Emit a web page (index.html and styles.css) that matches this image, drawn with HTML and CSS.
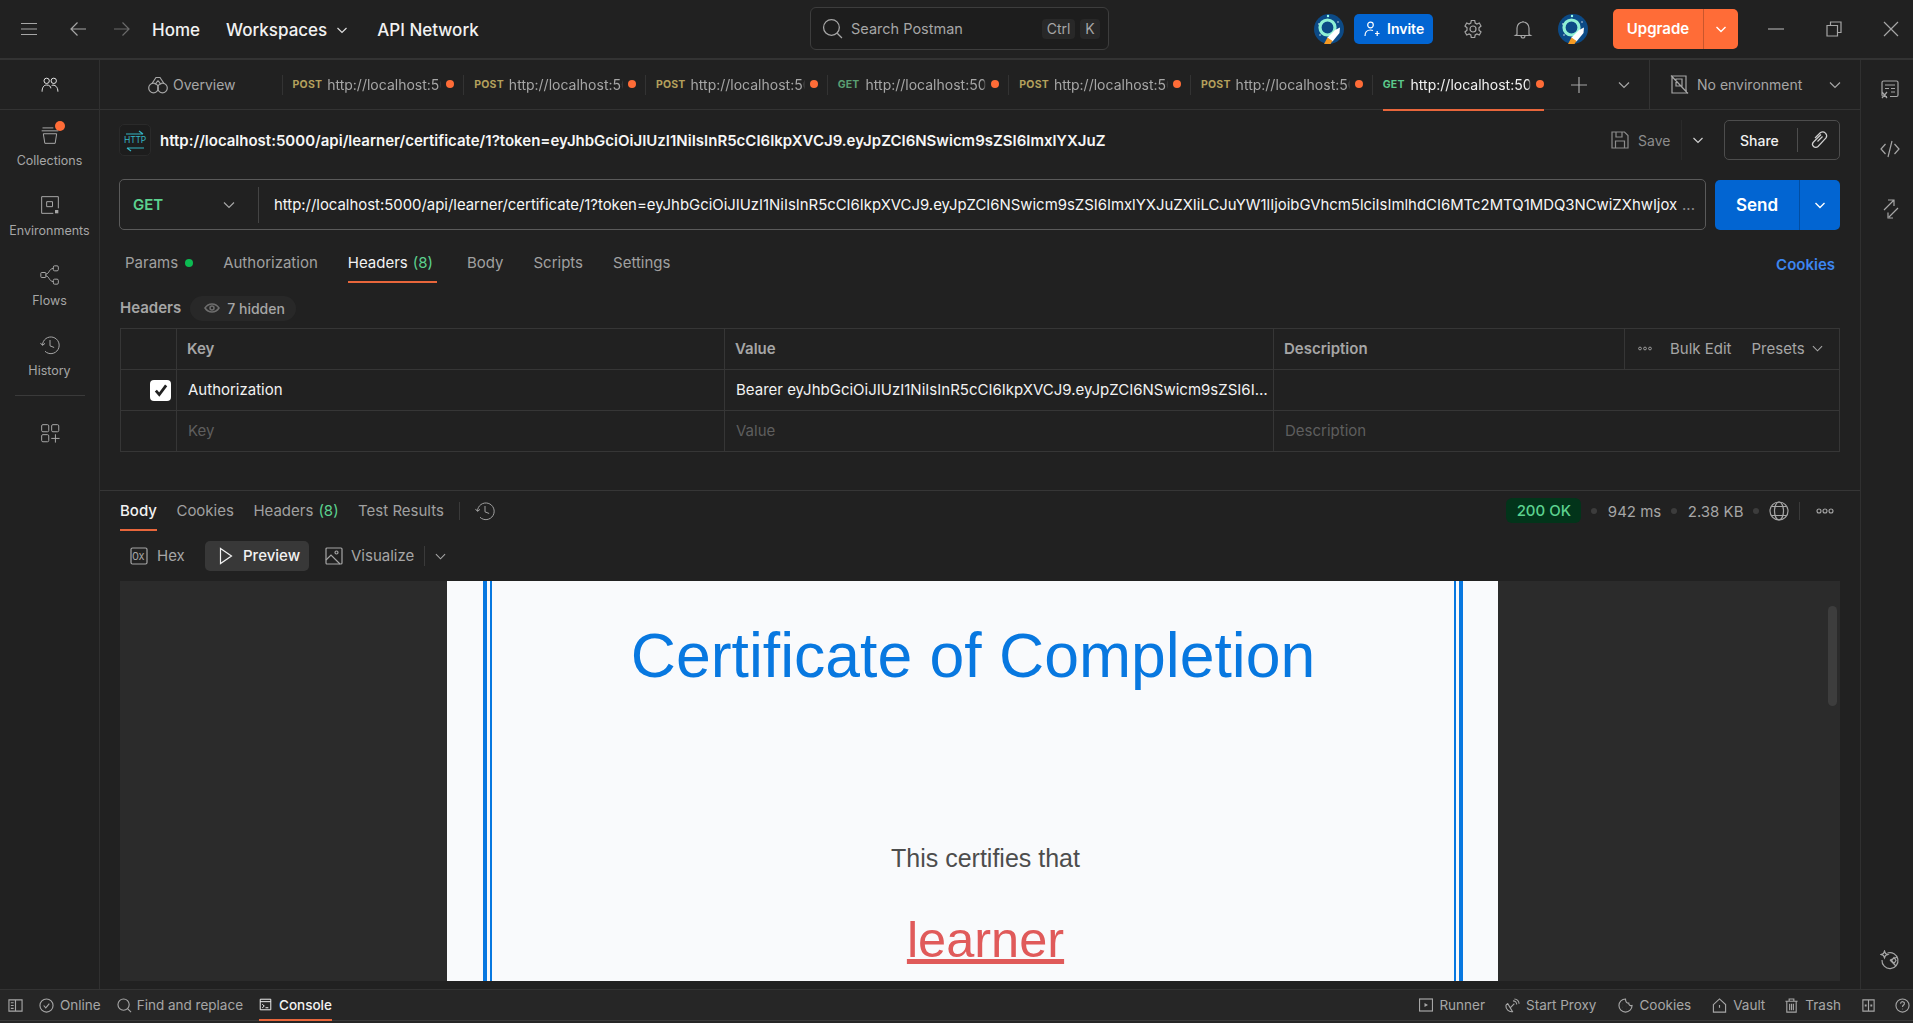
FILE: index.html
```html
<!DOCTYPE html>
<html lang="en">
<head>
<meta charset="utf-8">
<title>Postman</title>
<link rel="stylesheet" href="styles.css">
</head>
<body>
<header class="topbar">
  <div class="top-left">
    <svg class="ic hamb" viewBox="0 0 20 20"><path d="M2 4.500h16M2 10h16M2 15.500h16"/></svg>
    <svg class="ic back" viewBox="0 0 20 20"><path d="M18 10H3M9.500 3.500 3 10l6.500 6.500"/></svg>
    <svg class="ic fwd" viewBox="0 0 20 20"><path d="M2 10h15M10.500 3.500 17 10l-6.500 6.500"/></svg>
    <span class="nav home">Home</span>
    <span class="nav work">Workspaces</span>
    <svg class="ic chev-nav" viewBox="0 0 12 12"><path d="M1.500 4 6 8.500 10.500 4"/></svg>
    <span class="nav api">API Network</span>
  </div>
  <div class="search">
    <svg class="ic search-ic" viewBox="0 0 20 20"><circle cx="9" cy="9" r="7.500"/><path d="m14.500 14.500 4.500 4.500"/></svg>
    <span class="search-text">Search Postman</span>
    <span class="key key-ctrl">Ctrl</span>
    <span class="key key-k">K</span>
  </div>
  <div class="top-right">
    <svg class="avatar av1" viewBox="0 0 30 30"><circle cx="15" cy="15" r="15" fill="#0c4a86"/><circle cx="5" cy="10" r=".8" fill="#fff"/><circle cx="14" cy="2" r="1.200" fill="#9fe"/><circle cx="6" cy="21" r=".7" fill="#fff"/><circle cx="24" cy="8" r=".7" fill="#fff"/><circle cx="13.500" cy="13.500" r="7.500" fill="none" stroke="#8ff0d4" stroke-width="3.200"/><path d="M13 24l8-8 5-2.500-.5 5.500-7 8.500z" fill="#fff"/><path d="M10 30l3.500-6.500 5 3.500-2 3z" fill="#f59a23"/></svg>
    <button class="invite">
      <svg class="ic invite-ic" viewBox="0 0 16 16"><circle cx="6.500" cy="4" r="2.800"/><path d="M1 15c0-4 2-6 5.500-6 1 0 1.800.2 2.500.5M11 12.500h4.500M13.200 10v5"/></svg>
      <span>Invite</span>
    </button>
    <svg class="ic gear" viewBox="0 0 20 20"><path d="M8.300 1.500h3.400l.5 2.600 1.700.9 2.400-1 1.700 3-2 1.700v2.600l2 1.700-1.700 3-2.400-1-1.700.9-.5 2.600H8.300l-.5-2.600-1.700-.9-2.400 1-1.700-3 2-1.700V8.700l-2-1.700 1.700-3 2.400 1 1.700-.9z"/><circle cx="10" cy="10" r="3"/></svg>
    <svg class="ic bell" viewBox="0 0 20 20"><path d="M10 2v1.500M4 15.500V9a6 6 0 0 1 12 0v6.500l1.500 1h-15zM8 16.500a2 2.500 0 0 0 4 0"/></svg>
    <svg class="avatar av2" viewBox="0 0 30 30"><circle cx="15" cy="15" r="15" fill="#0c4a86"/><circle cx="5" cy="10" r=".8" fill="#fff"/><circle cx="14" cy="2" r="1.200" fill="#9fe"/><circle cx="6" cy="21" r=".7" fill="#fff"/><circle cx="24" cy="8" r=".7" fill="#fff"/><circle cx="13.500" cy="13.500" r="7.500" fill="none" stroke="#8ff0d4" stroke-width="3.200"/><path d="M13 24l8-8 5-2.500-.5 5.500-7 8.500z" fill="#fff"/><path d="M10 30l3.500-6.500 5 3.500-2 3z" fill="#f59a23"/></svg>
    <div class="upgrade">
      <span class="upgrade-main">Upgrade</span>
      <span class="upgrade-arrow"><svg class="ic" viewBox="0 0 12 12"><path d="M1.500 4 6 8.500 10.500 4"/></svg></span>
    </div>
    <svg class="ic win-min" viewBox="0 0 16 16"><path d="M0 8h16"/></svg>
    <svg class="ic win-res" viewBox="0 0 16 16"><path d="M1 4.500h10.500V15H1zM4.500 4.500V1H15v10.500h-3.500"/></svg>
    <svg class="ic win-close" viewBox="0 0 16 16"><path d="m1 1 14 14M15 1 1 15"/></svg>
  </div>
</header>

<div class="workspace">
  <aside class="sidebar">
    <div class="side-head">
      <svg class="ic side-ic" viewBox="0 0 24 24"><circle cx="8" cy="7" r="3.200"/><circle cx="16.500" cy="7" r="3.200"/><path d="M2.500 20c0-5 2-8 5.500-8s5 2 5 4M14 12.500c4-1.500 7.500 2 7.500 7.500"/></svg>
    </div>
    <nav class="side-nav">
      <div class="side-item">
        <span class="side-badge-wrap">
          <svg class="ic side-ic" viewBox="0 0 24 24"><path d="M2 7h20M4 10.500h16l-1.800 11.500H5.800zM3 3.500h13"/></svg>
          <i class="side-badge"></i>
        </span>
        <span class="side-label">Collections</span>
      </div>
      <div class="side-item">
        <svg class="ic side-ic" viewBox="0 0 24 24"><path d="M22 16V2H2v20h14"/><path d="M8 8h7v6H8z"/><path class="solid" d="M18 18h4v4h-4z"/></svg>
        <span class="side-label">Environments</span>
      </div>
      <div class="side-item">
        <svg class="ic side-ic" viewBox="0 0 24 24"><rect x="1" y="9" width="6" height="6" rx="1"/><rect x="16" y="1" width="6" height="6" rx="1.500"/><rect x="16" y="17" width="6" height="6" rx="1.500"/><path d="M7 11c5-1 3-6 9-7M7 13c5 1 3 6 9 7"/></svg>
        <span class="side-label">Flows</span>
      </div>
      <div class="side-item">
        <svg class="ic side-ic" viewBox="0 0 24 24"><path d="M3 12a10 10 0 1 1 3 7.500M0.500 9.500 3 12.500l3-2.500M12 6v7l5 2"/></svg>
        <span class="side-label">History</span>
      </div>
      <div class="side-sep"></div>
      <svg class="ic side-ic side-add" viewBox="0 0 24 24"><rect x="2" y="2" width="8.500" height="8.500" rx="1.500"/><rect x="14" y="2" width="8.500" height="8.500" rx="1.500"/><rect x="2" y="14" width="8.500" height="8.500" rx="1.500"/><path d="M13.500 18.500h10M18.500 13.500v10"/></svg>
    </nav>
  </aside>

  <main class="center">
    <div class="tabrow">
      <div class="tabs">
        <div class="tab-over">
          <svg class="ic over-ic" viewBox="0 0 20 20"><circle cx="5.500" cy="13" r="4.800"/><circle cx="14.500" cy="13" r="4.800"/><path d="M4 8.500 8 2.500h4l4 6M10 5.500 7 9.500M10 5.500l3 4"/></svg>
          <span>Overview</span>
        </div>
        <i class="tab-sep"></i>
        <div class="tab"><div class="tab-in"><b class="m-post">POST</b><span class="tab-url">http://localhost:50</span><i class="dot"></i></div></div>
        <i class="tab-sep"></i>
        <div class="tab"><div class="tab-in"><b class="m-post">POST</b><span class="tab-url">http://localhost:50</span><i class="dot"></i></div></div>
        <i class="tab-sep"></i>
        <div class="tab"><div class="tab-in"><b class="m-post">POST</b><span class="tab-url">http://localhost:50</span><i class="dot"></i></div></div>
        <i class="tab-sep"></i>
        <div class="tab"><div class="tab-in"><b class="m-get">GET</b><span class="tab-url">http://localhost:500</span><i class="dot"></i></div></div>
        <i class="tab-sep"></i>
        <div class="tab"><div class="tab-in"><b class="m-post">POST</b><span class="tab-url">http://localhost:50</span><i class="dot"></i></div></div>
        <i class="tab-sep"></i>
        <div class="tab"><div class="tab-in"><b class="m-post">POST</b><span class="tab-url">http://localhost:50</span><i class="dot"></i></div></div>
        <i class="tab-sep"></i>
        <div class="tab tab-active"><div class="tab-in"><b class="m-get-on">GET</b><span class="tab-url">http://localhost:500</span><i class="dot"></i></div></div>
        <svg class="ic tab-plus" viewBox="0 0 16 16"><path d="M8 0v16M0 8h16"/></svg>
        <svg class="ic tab-chev" viewBox="0 0 12 12"><path d="M1 3.500 6 8.500l5-5"/></svg>
      </div>
      <div class="envbox">
        <svg class="ic env-ic" viewBox="0 0 20 20"><path d="M16 14.500V1.500H2v17h14.500zM6 4.500h6v7H6zM1 1l17 18"/></svg>
        <span class="env-text">No environment</span>
        <svg class="ic env-chev" viewBox="0 0 12 12"><path d="M1 3.500 6 8.500l5-5"/></svg>
      </div>
    </div>

    <section class="pane">
      <div class="name-row">
        <div class="http-box">
          <svg class="http-ic" viewBox="0 0 24 24"><path d="M3 6h17M16 3l4 3M21 20H4M8 23l-4-3"/></svg>
          <span class="http-t">HTTP</span>
        </div>
        <span class="req-name">http://localhost:5000/api/learner/certificate/1?token=eyJhbGciOiJIUzI1NiIsInR5cCI6IkpXVCJ9.eyJpZCI6NSwicm9sZSI6ImxlYXJuZ</span>
        <svg class="ic save-ic" viewBox="0 0 18 18"><path d="M1 1h12.500L17 4.500V17H1zM5 1v5h6V1M4.500 17v-7h9v7"/></svg>
        <span class="save-text">Save</span>
        <i class="vsep save-sep"></i>
        <svg class="ic save-chev" viewBox="0 0 12 12"><path d="M1.500 4 6 8.500 10.500 4"/></svg>
        <div class="share">
          <span class="share-text">Share</span>
          <i class="vsep share-sep"></i>
          <svg class="ic link-ic" viewBox="0 0 20 20"><path d="M12 4.500 4.500 12a3 3 0 0 0 4.500 4.500l8-8.500a4 4 0 0 0-5.500-5.500L6 8M8.500 11.500l5-5"/></svg>
        </div>
      </div>

      <div class="url-row">
        <div class="url-box">
          <b class="url-method">GET</b>
          <svg class="ic url-chev" viewBox="0 0 12 12"><path d="M1 3.500 6 8.500l5-5"/></svg>
          <i class="vsep url-sep"></i>
          <span class="url-text">http://localhost:5000/api/learner/certificate/1?token=eyJhbGciOiJIUzI1NiIsInR5cCI6IkpXVCJ9.eyJpZCI6NSwicm9sZSI6ImxlYXJuZXIiLCJuYW1lIjoibGVhcm5lciIsImlhdCI6MTc2MTQ1MDQ3NCwiZXhwIjox</span>
          <span class="url-more">...</span>
        </div>
        <div class="send">
          <span class="send-main">Send</span>
          <span class="send-arrow"><svg class="ic" viewBox="0 0 12 12"><path d="M1.500 4 6 8.500 10.500 4"/></svg></span>
        </div>
      </div>

      <div class="req-tabs">
        <span class="rt rt-params">Params</span><i class="param-dot"></i>
        <span class="rt rt-auth">Authorization</span>
        <span class="rt rt-on rt-head">Headers <em>(8)</em></span>
        <span class="rt rt-body">Body</span>
        <span class="rt rt-scr">Scripts</span>
        <span class="rt rt-set">Settings</span>
        <span class="rt-cookies">Cookies</span>
      </div>

      <div class="head-label">
        <span class="head-t">Headers</span>
        <span class="pill">
          <svg class="eye" viewBox="0 0 16 10"><path d="M1 5c2-3 4.500-4 7-4s5 1 7 4c-2 3-4.500 4-7 4S3 8 1 5z"/><circle cx="8" cy="5" r="2"/></svg>
          <span>7 hidden</span>
        </span>
      </div>

      <div class="table">
        <div class="tr tr-head">
          <div class="td td-c"></div>
          <div class="td td-k th">Key</div>
          <div class="td td-v th">Value</div>
          <div class="td td-d th">Description</div>
          <div class="td td-a">
            <svg class="dots3" viewBox="0 0 14 4"><circle cx="2" cy="2" r="1.400"/><circle cx="7" cy="2" r="1.400"/><circle cx="12" cy="2" r="1.400"/></svg>
            <span class="bulk">Bulk Edit</span>
            <span class="presets">Presets</span>
            <svg class="ic pres-chev" viewBox="0 0 12 12"><path d="M1 3.500 6 8.500l5-5"/></svg>
          </div>
        </div>
        <div class="tr">
          <div class="td td-c"><span class="check"><svg viewBox="0 0 14 14"><path d="M2.500 7.500 5.500 11l6-8"/></svg></span></div>
          <div class="td td-k cell">Authorization</div>
          <div class="td td-v cell"><span class="cell-clip">Bearer eyJhbGciOiJIUzI1NiIsInR5cCI6IkpXVCJ9.eyJpZCI6NSwicm9sZSI6ImxlYXJuZXIiLCJuYW1lIjoibGVhcm5lciIs</span></div>
          <div class="td td-wide"></div>
        </div>
        <div class="tr tr-last">
          <div class="td td-c"></div>
          <div class="td td-k ph">Key</div>
          <div class="td td-v ph">Value</div>
          <div class="td td-wide ph">Description</div>
        </div>
      </div>
    </section>

    <section class="response">
      <div class="res-tabs">
        <span class="res-t res-on">Body</span>
        <span class="res-t res-ck">Cookies</span>
        <span class="res-t res-hd">Headers <em>(8)</em></span>
        <span class="res-t res-tr">Test Results</span>
        <i class="vsep res-sep"></i>
        <svg class="ic res-hist" viewBox="0 0 24 24"><path d="M3 12a10 10 0 1 1 3 7.500M0.500 9.500 3 12.500l3-2.500M12 6v7l5 2"/></svg>
        <span class="ok">200 OK</span>
        <i class="gdot"></i>
        <span class="meta meta-ms">942 ms</span>
        <i class="gdot"></i>
        <span class="meta meta-kb">2.38 KB</span>
        <i class="gdot"></i>
        <svg class="ic globe" viewBox="0 0 20 20"><circle cx="10" cy="10" r="9"/><ellipse cx="10" cy="10" rx="4.500" ry="9"/><path d="M2.500 5.500h15M2.500 14.500h15"/></svg>
        <i class="vsep res-sep2"></i>
        <svg class="dots3 res-dots" viewBox="0 0 18 6"><circle cx="3" cy="3" r="2"/><circle cx="9" cy="3" r="2"/><circle cx="15" cy="3" r="2"/></svg>
      </div>

      <div class="format-row">
        <div class="fmt fmt-hex">
          <svg class="ic fmt-ic" viewBox="0 0 18 18"><rect x="1" y="1" width="16" height="16" rx="1.500"/></svg>
          <span class="hex-0x">0x</span>
          <span class="fmt-t">Hex</span>
        </div>
        <div class="fmt fmt-on">
          <svg class="ic play-ic" viewBox="0 0 14 18"><path d="M1.500 1.500 12.500 9 1.500 16.500z"/></svg>
          <span class="fmt-t">Preview</span>
        </div>
        <div class="fmt fmt-vis">
          <svg class="ic fmt-ic" viewBox="0 0 18 18"><rect x="1" y="1" width="16" height="16" rx="1"/><circle cx="11.500" cy="5.500" r="1.500"/><path d="m1 13 5-5 9 9"/></svg>
          <span class="fmt-t">Visualize</span>
        </div>
        <i class="vsep fmt-sep"></i>
        <svg class="ic fmt-chev" viewBox="0 0 12 12"><path d="M1 3.500 6 8.500l5-5"/></svg>
      </div>

      <div class="preview">
        <div class="sheet">
          <div class="frame-outer">
            <div class="frame-inner">
              <h1 class="cert-title">Certificate of Completion</h1>
              <p class="cert-sub">This certifies that</p>
              <p class="cert-name"><u>learner</u></p>
            </div>
          </div>
        </div>
        <i class="scroll-thumb"></i>
      </div>
    </section>
  </main>

  <aside class="rail">
    <div class="rail-item rail-first"><svg class="ic rail-ic" viewBox="0 0 20 20"><path d="M7 17.500H3.500a1.500 1.500 0 0 1-1.500-1.500V3.500A1.500 1.500 0 0 1 3.500 2h13A1.500 1.500 0 0 1 18 3.500V16a1.500 1.500 0 0 1-1.500 1.500H10M5 6h10M5 9.500h4M11 9.500h4M11 13h4M2 13l5 6M7 13l-5 6"/></svg></div>
    <div class="rail-item"><svg class="ic rail-ic" viewBox="0 0 20 20"><path d="M5.500 5 1 10l4.500 5M14.500 5 19 10l-4.500 5M12 2 8 18"/></svg></div>
    <div class="rail-item"><svg class="ic rail-ic" viewBox="0 0 20 20"><path d="M3 11 13 1M7 1h6v6M17 9 8 18M12 19H7v-5.500" transform="translate(1 0)"/></svg></div>
    <div class="rail-item rail-last"><svg class="ic rail-ic" viewBox="0 0 20 20"><path d="M7.500 3a8 8 0 1 1-5.500 7M10 10l7.500-3M10 10l6 6M14 7.500l2 3-2 3-2.500-3z"/><path d="M4.500 1l1 2.500L8 4.500 5.500 5.500l-1 2.500-1-2.500L1 4.500l2.500-1z"/></svg></div>
  </aside>
</div>

<footer class="footer">
  <div class="foot-in">
    <svg class="ic foot-ic f-panel" viewBox="0 0 16 16"><path d="M1 2h14v12H1zM8 2v12M3 5h3M3 8h3M3 11h3"/></svg>
    <svg class="ic foot-ic f-on" viewBox="0 0 16 16"><circle cx="8" cy="8" r="7"/><path d="m5 8 2.200 2.500L11 6"/></svg>
    <span class="ft f-on-t">Online</span>
    <svg class="ic foot-ic f-s" viewBox="0 0 16 16"><circle cx="7" cy="7" r="6"/><path d="m11.500 11.500 3.500 3.500"/></svg>
    <span class="ft f-find">Find and replace</span>
    <div class="f-console">
      <svg class="ic foot-ic f-con-ic" viewBox="0 0 16 16"><path d="M1.500 1.500h13v13h-13zM1.500 4.500h13M4 7.500l2.500 2.500L4 12M8 12h3.500"/></svg>
      <span>Console</span>
    </div>
    <span class="foot-gap"></span>
    <svg class="ic foot-ic f-run" viewBox="0 0 14 14"><rect x=".5" y="1" width="13" height="12"/><path class="solid" d="M5.500 5 9 7l-3.500 2z"/></svg>
    <span class="ft f-run-t">Runner</span>
    <svg class="ic foot-ic f-prox" viewBox="0 0 16 16"><path d="M1 8a6 6 0 0 0 7 6.500L3 6C2 6.500 1 7 1 8zM5.500 10.500 10 6M8.500 3a4 4 0 0 1 4 4M10 1a5 5 0 0 1 5 5"/></svg>
    <span class="ft f-prox-t">Start Proxy</span>
    <svg class="ic foot-ic f-ck" viewBox="0 0 16 16"><path d="M8 1a7 7 0 1 0 7 7c-2 .5-3.500-.5-3.500-2.500C9.500 5.500 8 3.500 8 1zM5 6h.1M5 10h.1M8.500 8.500h.1M9.500 12h.1"/></svg>
    <span class="ft f-ck-t">Cookies</span>
    <svg class="ic foot-ic f-v" viewBox="0 0 16 16"><path d="M1.500 7 8 1l6.500 6v8h-13zM8 7.500v3"/></svg>
    <span class="ft f-v-t">Vault</span>
    <svg class="ic foot-ic f-t" viewBox="0 0 16 16"><path d="M1.500 3.500h13M5.500 3.500V1h5v2.500M3 3.500V15h10V3.500M6 6v7M8 6v7M10 6v7"/></svg>
    <span class="ft f-t-t">Trash</span>
    <svg class="ic foot-ic f-pp" viewBox="0 0 16 16"><path d="M2 2h12v12H2zM8 2v12"/><path class="solid" d="M4 7h2v2H4zM10 7h2v2h-2z"/></svg>
    <svg class="ic foot-ic f-h" viewBox="0 0 16 16"><circle cx="8" cy="8" r="7"/><path d="M6 6c0-3 4.500-2.500 4 0 0 1.500-2 1.500-2 3.500M8 11.500v.5"/></svg>
  </div>
</footer>
</body>
</html>
```

FILE: styles.css
```css
* { box-sizing: border-box; }
html, body { margin: 0; height: 100%; }
body {
  width: 1913px; height: 1023px; overflow: hidden;
  display: flex; flex-direction: column;
  background: #212121; color: #a6a6a6;
  font-family: Inter, "Noto Sans", sans-serif; font-size: 15px;
}
i, em { font-style: normal; }
.ic { display: block; flex: none; fill: none; stroke: currentColor; stroke-width: 1.2; }
.ic .solid { fill: currentColor; stroke: none; }
.vsep { display: block; flex: none; width: 1px; background: #3a3a3a; }

/* top bar */
.topbar {
  height: 60px; flex: none; display: grid;
  grid-template-columns: 810px 299px 1fr;
  align-items: center; border-bottom: 2px solid #333;
}
.top-left { display: flex; align-items: center; height: 100%; color: #fff; }
.hamb { width: 20px; height: 20px; margin-left: 19px; color: #a6a6a6; }
.back { width: 20px; height: 20px; margin-left: 29px; color: #a6a6a6; }
.fwd { width: 20px; height: 20px; margin-left: 24px; color: #6b6b6b; }
.nav { font-size: 17px; font-weight: 500; color: #f2f2f2; white-space: nowrap; margin-top: 2px; }
.home { margin-left: 20px; }
.work { margin-left: 26px; }
.chev-nav { width: 12px; height: 12px; margin-left: 9px; color: #ddd; margin-top: 1px; }
.api { margin-left: 29px; }

.search {
  height: 43px; display: flex; align-items: center;
  border: 1px solid #3d3d3d; border-radius: 6px; background: #1d1d1d;
  margin-top: -1px;
}
.search-ic { width: 21px; height: 21px; margin-left: 11px; color: #a6a6a6; }
.search-text { margin-left: 8px; width: 191px; font-size: 14.500px; color: #a6a6a6; }
.key { height: 20px; display: flex; align-items: center; justify-content: center; background: #282828; border-radius: 4px; font-size: 14px; color: #a6a6a6; }
.key-ctrl { width: 33px; }
.key-k { width: 20px; margin-left: 5px; }

.top-right { display: flex; align-items: center; height: 100%; margin-top: -1px; }
.avatar { display: block; flex: none; width: 30px; height: 30px; }
.av1 { margin-left: 205px; }
.invite {
  display: flex; align-items: center; width: 79px; height: 30px; margin-left: 10px; padding: 0 0 0 10px;
  background: #0265d2; color: #fff; border: 0; border-radius: 5px;
  font: 600 14px Inter, sans-serif;
}
.invite-ic { width: 16px; height: 16px; margin-right: 7px; }
.gear { width: 20px; height: 20px; margin-left: 30px; color: #a6a6a6; }
.bell { width: 20px; height: 20px; margin-left: 30px; color: #a6a6a6; }
.av2 { margin-left: 25px; }
.upgrade { display: flex; width: 125px; height: 40px; margin-left: 25px; background: #ff6c37; border-radius: 5px; color: #fff; }
.upgrade-main { width: 91px; display: flex; align-items: center; justify-content: center; font-size: 15px; font-weight: 600; border-right: 1px solid #c9562c; }
.upgrade-arrow { flex: 1; display: flex; align-items: center; justify-content: center; }
.upgrade-arrow .ic { width: 12px; height: 12px; stroke-width: 1.400; }
.win-min { width: 16px; height: 16px; margin-left: 30px; color: #a6a6a6; }
.win-res { width: 16px; height: 16px; margin-left: 42px; color: #a6a6a6; }
.win-close { width: 16px; height: 16px; margin-left: 41px; color: #a6a6a6; }

/* workspace */
.workspace { flex: 1; min-height: 0; display: flex; }

.sidebar { width: 100px; flex: none; border-right: 1px solid #303030; }
.side-head { height: 50px; display: flex; align-items: center; justify-content: center; border-bottom: 1px solid #333; color: #e6e6e6; }
.side-ic { width: 20px; height: 20px; margin: 2px; }
.side-nav { display: flex; flex-direction: column; align-items: center; padding-top: 5px; }
.side-item { height: 70px; width: 100%; padding-top: 8px; display: flex; flex-direction: column; align-items: center; gap: 5px; }
.side-label { font-size: 12.500px; line-height: 18px; color: #a6a6a6; }
.side-badge-wrap { position: relative; display: block; width: 24px; height: 24px; }
.side-badge { position: absolute; top: -2px; right: -3px; width: 10px; height: 10px; border-radius: 50%; background: #ff6c37; }
.side-sep { width: 70px; height: 1px; background: #3a3a3a; }
.side-add { margin-top: 27px; }

.center { width: 1760px; flex: none; display: flex; flex-direction: column; min-height: 0; }

/* tabs */
.tabrow { height: 50px; flex: none; display: flex; border-bottom: 1px solid #333; }
.tabs { width: 1550px; display: flex; align-items: center; border-right: 1px solid #333; }
.tab-over { width: 181.600px; display: flex; align-items: center; padding-left: 48px; font-size: 14px; color: #a6a6a6; }
.over-ic { width: 20px; height: 20px; margin-right: 5px; }
.tab-sep { display: block; flex: none; width: 1px; height: 20px; background: #333; }
.tab { width: 180.700px; height: 50px; padding: 0 9px 0 10px; color: #a6a6a6; }
.tab-in { height: 51px; display: flex; align-items: center; border-bottom: 2px solid transparent; font-size: 14px; }
.tab-in b { font-size: 10.500px; font-weight: 700; margin-right: 6px; letter-spacing: .2px; }
.tab-in .m-post { color: #b4a05c; margin-right: 5px; }
.m-get { color: #5a9e72; }
.m-get-on { color: #5cc98c; }
.tab-url { flex: 1; min-width: 0; overflow: hidden; white-space: nowrap; -webkit-mask-image: linear-gradient(to left, transparent 0, #000 3px); mask-image: linear-gradient(to left, transparent 0, #000 3px); }
.dot { display: block; flex: none; width: 8px; height: 8px; margin-left: 5px; border-radius: 50%; background: #ff6c37; }
.tab-active { color: #f2f2f2; }
.tab-active .tab-in { border-bottom-color: #e8663b; }
.tab-plus { width: 16px; height: 16px; margin-left: 18px; color: #a6a6a6; }
.tab-chev { width: 12px; height: 12px; margin-left: 31px; color: #a6a6a6; }
.envbox { flex: 1; display: flex; align-items: center; color: #a6a6a6; }
.env-ic { width: 20px; height: 21px; margin-left: 20px; }
.env-text { margin-left: 7px; font-size: 14px; width: 132px; }
.env-chev { width: 12px; height: 12px; }

/* request */
.pane { flex: none; padding: 0 20px 38px 19px; }
.name-row { height: 40px; margin-top: 10px; display: flex; align-items: center; }
.http-box { width: 32px; height: 32px; border-radius: 5px; background: #1d1d1d; border: 1px solid #2a2a2a; display: flex; align-items: center; justify-content: center; position: relative; flex: none; }
.http-ic { position: absolute; inset: 3px; fill: none; stroke: #35b5c4; stroke-width: 1.200; }
.http-t { font-size: 8.500px; color: #35b5c4; letter-spacing: -.2px; }
.req-name { margin-left: 9px; font-size: 15px; font-weight: 600; color: #f6f6f6; white-space: nowrap; flex: 1; min-width: 0; }
.save-ic { width: 18px; height: 18px; color: #8c8c8c; }
.save-text { margin-left: 9px; width: 43px; color: #8c8c8c; font-size: 14px; flex: none; }
.save-sep { height: 40px; background: #2a2a2a; }
.save-chev { width: 12px; height: 12px; margin-left: 10px; color: #d0d0d0; }
.share { width: 116px; height: 40px; margin-left: 20px; display: flex; align-items: center; border: 1px solid #4d4d4d; border-radius: 5px; color: #f0f0f0; font-size: 14px; font-weight: 500; flex: none; }
.share-text { margin-left: 15px; width: 57px; }
.share-sep { height: 24px; background: #4d4d4d; }
.link-ic { width: 20px; height: 20px; margin-left: 11px; color: #d0d0d0; }

.url-row { height: 51px; margin-top: 19px; display: flex; align-items: center; }
.url-box { width: 1587px; height: 51px; display: flex; align-items: center; border: 1px solid #5a5a5a; border-radius: 5px; flex: none; }
.url-method { width: 90px; margin-left: 13px; color: #5cd28f; font-size: 15px; font-weight: 600; flex: none; }
.url-chev { width: 12px; height: 12px; color: #a6a6a6; }
.url-sep { height: 36px; margin-left: 23px; background: #444; }
.url-text { width: 1405px; margin-left: 15px; overflow: hidden; white-space: nowrap; color: #f6f6f6; font-size: 14.900px; flex: none; }
.url-more { margin-left: 3px; color: #8c8c8c; }
.send { width: 125px; height: 50px; margin-left: 9px; display: flex; background: #0265d2; border-radius: 5px; color: #fff; flex: none; }
.send-main { width: 85px; display: flex; align-items: center; justify-content: center; font-size: 17px; font-weight: 600; border-right: 1px solid #014ea3; }
.send-arrow { flex: 1; display: flex; align-items: center; justify-content: center; }
.send-arrow .ic { width: 12px; height: 12px; stroke-width: 1.400; }

.req-tabs { height: 39px; margin-top: 14px; display: flex; align-items: stretch; font-size: 15px; color: #a0a0a0; }
.rt { display: flex; align-items: center; gap: 5px; border-bottom: 2px solid transparent; white-space: nowrap; }
.rt em { color: #5cd28f; }
.rt-params { margin-left: 6px; }
.param-dot { display: block; width: 8px; height: 8px; margin: 15px 0 0 7px; border-radius: 50%; background: #0cbb52; flex: none; }
.rt-auth { margin-left: 30px; }
.rt-on { color: #f2f2f2; border-bottom-color: #e8663b; }
.rt-head { margin-left: 30px; padding-right: 4px; }
.rt-body { margin-left: 30px; }
.rt-scr { margin-left: 30px; }
.rt-set { margin-left: 30px; }
.rt-cookies { margin-left: auto; align-self: center; margin-right: 5px; color: #3d86f0; font-weight: 600; font-size: 15px; margin-top: 1px; }

.head-label { height: 24px; margin-top: 13px; display: flex; align-items: center; font-size: 15px; }
.head-t { color: #a6a6a6; font-weight: 600; margin-left: 1px; padding-bottom: 2px; }
.pill { height: 25px; width: 106px; margin-left: 9px; display: flex; align-items: center; gap: 7px; padding-left: 14px; border-radius: 13px; background: #282828; font-weight: 500; font-size: 14px; }
.eye { width: 16px; height: 10px; fill: none; stroke: #6e6e6e; stroke-width: 1.500; }

.table { margin-top: 8px; margin-left: 1px; border: 1px solid #363636; font-size: 15px; }
.tr { display: flex; height: 41px; border-bottom: 1px solid #363636; }
.tr-head { height: 41px; }
.tr-last { height: 40px; border-bottom: 0; }
.td { display: flex; align-items: center; flex: none; border-right: 1px solid #363636; min-width: 0; padding-bottom: 2px; }
.td-c { width: 56px; justify-content: flex-end; padding-right: 5px; padding-bottom: 0; }
.td-k { width: 548px; padding-left: 10px; }
.td-v { width: 549px; padding-left: 10px; padding-right: 5px; }
.td-d { width: 351px; padding-left: 10px; }
.td-a { flex: 1; border-right: 0; padding-left: 13px; }
.td-wide { flex: 1; border-right: 0; padding-left: 11px; }
.th { font-weight: 600; color: #a6a6a6; padding-left: 10px; }
.cell { color: #f2f2f2; padding-left: 11px; }
.cell-clip { display: block; min-width: 0; overflow: hidden; white-space: nowrap; text-overflow: ellipsis; }
.ph { color: #5e5e5e; padding-left: 11px; }
.check { display: flex; width: 21px; height: 21px; align-items: center; justify-content: center; background: #fff; border-radius: 4px; }
.check svg { width: 16px; height: 16px; fill: none; stroke: #212121; stroke-width: 2.400; }
.dots3 { display: block; flex: none; width: 14px; height: 5px; fill: none; stroke: #a6a6a6; stroke-width: .9; }
.bulk { margin-left: 18px; color: #a6a6a6; }
.presets { margin-left: 20px; color: #a6a6a6; }
.pres-chev { width: 11px; height: 11px; margin-left: 7px; color: #a6a6a6; }

/* response */
.response { flex: 1; min-height: 0; display: flex; flex-direction: column; border-top: 1px solid #363636; }
.res-tabs { height: 40px; flex: none; margin: 0 20px 0 20px; display: flex; align-items: stretch; font-size: 15px; color: #a0a0a0; }
.res-t { display: flex; align-items: center; gap: 5px; border-bottom: 2px solid transparent; white-space: nowrap; }
.res-t em { color: #5cd28f; }
.res-on { color: #f2f2f2; font-weight: 500; border-bottom-color: #e8663b; }
.res-ck, .res-hd, .res-tr { margin-left: 19.500px; }
.res-sep { height: 18px; margin: 11px 0 0 15px; background: #3a3a3a; }
.res-hist { width: 20px; height: 20px; margin: 10px 0 0 15px; }
.ok { height: 25px; align-self: center; margin-left: auto; width: 75px; display: flex; align-items: center; justify-content: center; border-radius: 6px; background: #02341a; color: #5cd28f; font-weight: 500; margin-top: -2px; }
.gdot { display: block; width: 6px; height: 6px; align-self: center; margin: 0 0 0 9.500px; border-radius: 50%; background: #3c3c3c; flex: none; }
.meta { align-self: center; margin-left: 11px; color: #a6a6a6; }
.globe { width: 20px; height: 24px; align-self: center; margin-left: 10px; stroke: #a6a6a6; }
.res-sep2 { height: 18px; align-self: center; margin-left: 10px; }
.res-dots { width: 18px; height: 6px; align-self: center; margin-left: 16px; margin-right: 6px; stroke-width: 1.100; }

.format-row { height: 30px; flex: none; margin: 10px 20px 0 20px; display: flex; align-items: center; font-size: 15px; color: #a6a6a6; }
.fmt { position: relative; display: flex; align-items: center; height: 30px; }
.fmt-t { padding-bottom: 2px; }
.fmt-hex { margin-left: 10px; width: 75px; }
.fmt-hex .fmt-ic { margin-right: 9px; }
.fmt-ic { width: 18px; height: 18px; }
.hex-0x { position: absolute; left: 2px; top: 7px; font-size: 11px; line-height: 16px; letter-spacing: -.5px; }
.fmt-on { width: 104px; border-radius: 5px; background: #383838; color: #f2f2f2; font-weight: 500; padding-left: 14px; }
.play-ic { width: 14px; height: 18px; margin-right: 10px; }
.fmt-vis { margin-left: 16px; }
.fmt-vis .fmt-ic { margin-right: 8px; }
.fmt-sep { height: 20px; margin-left: 10px; }
.fmt-chev { width: 11px; height: 11px; margin-left: 10px; }

.preview { flex: none; height: 400px; margin: 10px 20px 0 20px; background: #2b2b2b; display: flex; position: relative; overflow: hidden; }
.sheet { width: 1051px; height: 400px; margin-left: 327px; flex: none; background: #f9fafc; padding: 0 35px 0 36px; overflow: hidden; }
.frame-outer { height: 100%; border-left: 4px solid #0878e0; border-right: 4px solid #0878e0; padding: 0 3px; }
.frame-inner { height: 100%; border-left: 2px solid #0878e0; border-right: 2px solid #0878e0; text-align: center; font-family: "Liberation Sans", Arial, sans-serif; }
.cert-title { margin: 0; padding-top: 34px; font-size: 62.500px; line-height: 80px; font-weight: 400; color: #0878e0; }
.cert-sub { margin: 0; padding: 148px 0 0 25px; font-size: 25px; line-height: 30px; color: #4d4d4d; }
.cert-name { margin: 0; padding: 37px 0 0 25px; font-size: 50.500px; line-height: 60px; color: #e05a5a; }
.cert-name u { text-decoration-thickness: 5px; text-underline-offset: 2px; }
.scroll-thumb { position: absolute; top: 25px; right: 3px; width: 9px; height: 100px; border-radius: 5px; background: #3d3d3d; }

/* right rail */
.rail { flex: 1; display: flex; flex-direction: column; align-items: center; border-left: 1px solid #303030; color: #a6a6a6; padding-left: 6px; }
.rail-item { height: 60px; display: flex; align-items: center; justify-content: center; }
.rail-first { margin-top: -1px; }
.rail-ic { width: 20px; height: 20px; }
.rail-last { margin-top: auto; height: 24px; margin-bottom: 17px; }

/* footer */
.footer { height: 34px; flex: none; border-top: 1px solid #333; background: #262626; }
.foot-in { height: 31px; display: flex; align-items: center; border-bottom: 1px solid #3a3a3a; font-size: 13.500px; color: #a6a6a6; }
.foot-ic { width: 15px; height: 15px; }
.ft { margin-left: 6px; white-space: nowrap; }
.f-panel { margin-left: 8px; }
.f-on { margin-left: 16px; }
.f-s { margin-left: 16px; }
.f-find { margin-left: 5px; }
.f-console { display: flex; align-items: center; height: 31px; margin-left: 16px; gap: 7px; color: #f2f2f2; font-weight: 500; border-bottom: 2px solid #e8663b; margin-top: 1px; }
.f-con-ic { width: 13px; height: 13px; }
.foot-gap { flex: 1; }
.f-run { width: 14px; height: 14px; }
.f-prox { margin-left: 20px; }
.f-ck { margin-left: 22px; }
.f-v { margin-left: 21px; }
.f-t { margin-left: 19px; }
.f-pp { margin-left: 20px; }
.f-h { margin-left: 19px; margin-right: 3px; }
```
